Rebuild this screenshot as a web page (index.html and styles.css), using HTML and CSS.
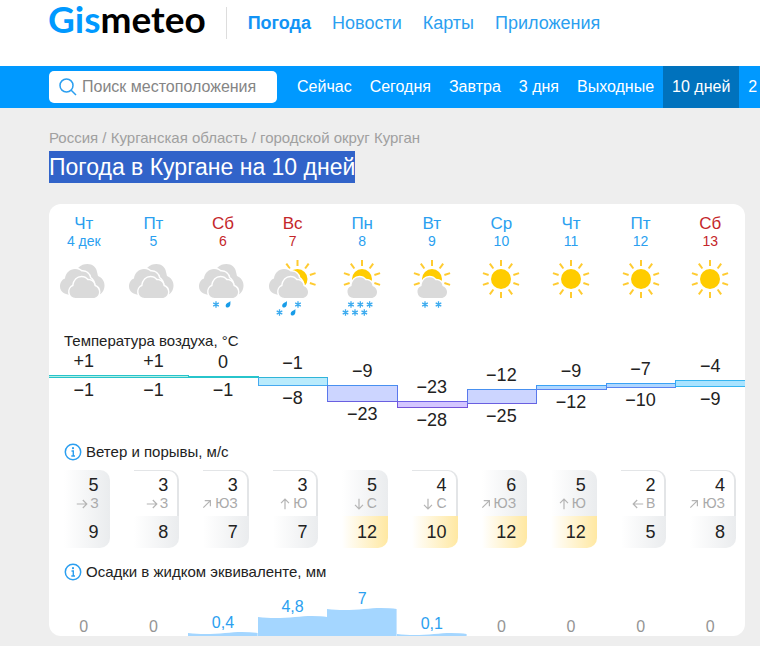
FILE: index.html
```html
<!DOCTYPE html>
<html lang="ru">
<head>
<meta charset="utf-8">
<meta name="viewport" content="width=device-width, initial-scale=1">
<title>Погода в Кургане на 10 дней</title>
<link rel="stylesheet" href="styles.css">
</head>
<body>
<svg class="sprite" aria-hidden="true">
  <defs>
    <symbol id="front" viewBox="0 0 56 62"><path class="cloud" d="M19.5 40A6.2 6.2 0 0 1 17.500 28C18 22.500 21.500 19.300 25.500 19.300C28.500 19.300 30 20.500 31.500 22.200C35.500 21.700 38.300 24.500 38.500 28C41.500 29 43 31.500 43 34C43 37.500 40.500 40 37 40Z"/></symbol>
    <symbol id="mid" viewBox="0 0 56 62"><path class="cloud" d="M16 37C8 37 4 33 4 28.500C4 24.500 6 21.500 9 20.500C9.500 15 14 11 19 11C22 11 24 12 25.500 13.500C30 13 33.500 16 34 20C37 22 38 24 38 28L30 36Z"/></symbol>
    <symbol id="rear" viewBox="0 0 56 62"><path class="cloud" d="M22.500 9.500C25 7 28 6 31.500 6C36.500 6 40.500 9.500 41 14C41.500 15 41.500 17 42 18C46 19.500 48.500 23 48.500 27.500C48.500 32 46 36 42.500 37L30 34L22 12Z"/></symbol>
    <symbol id="sun" viewBox="0 0 56 62">
      <circle class="disc" cx="28" cy="21" r="10"/>
      <g class="rays">
        <path id="ray" d="M28 2V8"/>
        <use href="#ray" transform="rotate(36 28 21)"/><use href="#ray" transform="rotate(72 28 21)"/>
        <use href="#ray" transform="rotate(108 28 21)"/><use href="#ray" transform="rotate(144 28 21)"/>
        <use href="#ray" transform="rotate(180 28 21)"/><use href="#ray" transform="rotate(216 28 21)"/>
        <use href="#ray" transform="rotate(252 28 21)"/><use href="#ray" transform="rotate(288 28 21)"/>
        <use href="#ray" transform="rotate(324 28 21)"/>
      </g>
    </symbol>
    <symbol id="sunrise" viewBox="0 0 56 62">
      <circle class="disc" cx="28" cy="21" r="10"/>
      <g class="rays">
        <path d="M28 2V8"/>
        <use href="#ray" transform="rotate(36 28 21)"/><use href="#ray" transform="rotate(72 28 21)"/>
        <use href="#ray" transform="rotate(108 28 21)"/><use href="#ray" transform="rotate(252 28 21)"/>
        <use href="#ray" transform="rotate(288 28 21)"/><use href="#ray" transform="rotate(324 28 21)"/>
      </g>
    </symbol>
    <g id="flake" class="flake"><path d="M0 -3.200V3.200M-2.800 -1.600L2.800 1.600M-2.800 1.600L2.800 -1.600"/></g>
    <path id="drop" class="drop" d="M2.300 -3.500C2.600 -1 2.600 3 -.300 3C-2.600 3 -2.800 .500 -1.500 -.800C-.500 -1.800 1.200 -2 2.300 -3.500Z"/>
    <symbol id="info" viewBox="0 0 18 18"><circle cx="9" cy="9" r="7.700" fill="none" stroke="#2b9ff0" stroke-width="1.500"/><circle cx="9" cy="5.200" r="1.100" fill="#2b9ff0"/><path d="M7.500 8H9.300V13M7.300 13H11" fill="none" stroke="#2b9ff0" stroke-width="1.400"/></symbol>
    <symbol id="arrow" viewBox="0 0 12 12"><path d="M6 11.200V1.200M2 5.200L6 1.200L10 5.200" fill="none" stroke="#b4b4b4" stroke-width="1.200"/></symbol>
  </defs>
</svg>

<header class="top">
  <a class="logo" href="#"><span class="logo-accent">Gis</span>meteo</a>
  <nav class="sections" aria-label="Разделы">
    <a class="current" href="#">Погода</a>
    <a href="#">Новости</a>
    <a href="#">Карты</a>
    <a href="#">Приложения</a>
  </nav>
</header>

<div class="bar">
  <label class="search">
    <svg class="lens" viewBox="0 0 18 18" aria-hidden="true"><circle cx="7.500" cy="7.500" r="6.500"/><path d="M12.200 12.200L17 17"/></svg>
    <input type="text" placeholder="Поиск местоположения" aria-label="Поиск местоположения">
  </label>
  <nav class="periods" aria-label="Период">
    <a href="#">Сейчас</a>
    <a href="#">Сегодня</a>
    <a href="#">Завтра</a>
    <a href="#">3 дня</a>
    <a href="#">Выходные</a>
    <a class="active" href="#">10 дней</a>
    <a href="#">2 недели</a>
  </nav>
</div>

<main class="page">
  <nav class="crumbs" aria-label="Расположение"><a href="#">Россия</a> / <a href="#">Курганская область</a> / <a href="#">городской округ Курган</a></nav>
  <h1><span class="marked">Погода в Кургане на 10 дней</span></h1>

  <section class="card">
    <div class="row days">
      <a class="day" href="#"><span>Чт</span><small>4 дек</small></a>
      <a class="day" href="#"><span>Пт</span><small>5</small></a>
      <a class="day weekend" href="#"><span>Сб</span><small>6</small></a>
      <a class="day weekend" href="#"><span>Вс</span><small>7</small></a>
      <a class="day" href="#"><span>Пн</span><small>8</small></a>
      <a class="day" href="#"><span>Вт</span><small>9</small></a>
      <a class="day" href="#"><span>Ср</span><small>10</small></a>
      <a class="day" href="#"><span>Чт</span><small>11</small></a>
      <a class="day" href="#"><span>Пт</span><small>12</small></a>
      <a class="day weekend" href="#"><span>Сб</span><small>13</small></a>
    </div>

    <div class="row icons">
      <svg viewBox="0 0 56 62"><use href="#rear"/><use href="#mid"/><use href="#front"/></svg>
      <svg viewBox="0 0 56 62"><use href="#rear"/><use href="#mid"/><use href="#front"/></svg>
      <svg viewBox="0 0 56 62"><use href="#rear"/><use href="#mid"/><use href="#front"/><use href="#flake" x="21" y="46.500"/><use href="#drop" x="33" y="46.500"/></svg>
      <svg viewBox="0 0 56 62"><use href="#sunrise" x="4.500"/><use href="#mid"/><use href="#front"/><use href="#drop" x="19.500" y="46.500"/><use href="#flake" x="33" y="46.500"/><use href="#flake" x="14.500" y="54.500"/><use href="#drop" x="28" y="54.500"/></svg>
      <svg viewBox="0 0 56 62"><use href="#sunrise"/><use href="#front"/><use href="#flake" x="17" y="46.500"/><use href="#flake" x="26.300" y="46.500"/><use href="#flake" x="35.600" y="46.500"/><use href="#flake" x="11.500" y="54.500"/><use href="#flake" x="21" y="54.500"/><use href="#flake" x="30.300" y="54.500"/></svg>
      <svg viewBox="0 0 56 62"><use href="#sunrise"/><use href="#front"/><use href="#flake" x="21" y="46.500"/><use href="#flake" x="34.500" y="46.500"/></svg>
      <svg viewBox="0 0 56 62"><use href="#sun"/></svg>
      <svg viewBox="0 0 56 62"><use href="#sun"/></svg>
      <svg viewBox="0 0 56 62"><use href="#sun"/></svg>
      <svg viewBox="0 0 56 62"><use href="#sun"/></svg>
    </div>

    <h2>Температура воздуха, °C</h2>
    <div class="row temps">
      <div class="temp mild" style="padding-top:0px"><span>+1</span><i style="height:3px"></i><span>−1</span></div>
      <div class="temp mild" style="padding-top:0px"><span>+1</span><i style="height:3px"></i><span>−1</span></div>
      <div class="temp zero" style="padding-top:1px"><span>0</span><i style="height:2px"></i><span>−1</span></div>
      <div class="temp cool" style="padding-top:2px"><span>−1</span><i style="height:9px"></i><span>−8</span></div>
      <div class="temp frost" style="padding-top:10px"><span>−9</span><i style="height:17px"></i><span>−23</span></div>
      <div class="temp deep" style="padding-top:26px"><span>−23</span><i style="height:7px"></i><span>−28</span></div>
      <div class="temp frost" style="padding-top:14px"><span>−12</span><i style="height:15px"></i><span>−25</span></div>
      <div class="temp cold" style="padding-top:10px"><span>−9</span><i style="height:5px"></i><span>−12</span></div>
      <div class="temp cold" style="padding-top:8px"><span>−7</span><i style="height:5px"></i><span>−10</span></div>
      <div class="temp fresh" style="padding-top:5px"><span>−4</span><i style="height:7px"></i><span>−9</span></div>
    </div>

    <h2><svg class="info" aria-hidden="true"><use href="#info"/></svg>Ветер и порывы, м/с</h2>
    <div class="row winds">
      <div class="wind strong"><div class="speed"><b>5</b><small><svg class="arrow e"><use href="#arrow"/></svg>З</small></div><b class="gust">9</b></div>
      <div class="wind"><div class="speed"><b>3</b><small><svg class="arrow e"><use href="#arrow"/></svg>З</small></div><b class="gust">8</b></div>
      <div class="wind"><div class="speed"><b>3</b><small><svg class="arrow ne"><use href="#arrow"/></svg>ЮЗ</small></div><b class="gust">7</b></div>
      <div class="wind"><div class="speed"><b>3</b><small><svg class="arrow"><use href="#arrow"/></svg>Ю</small></div><b class="gust">7</b></div>
      <div class="wind strong"><div class="speed"><b>5</b><small><svg class="arrow s"><use href="#arrow"/></svg>С</small></div><b class="gust warn">12</b></div>
      <div class="wind"><div class="speed"><b>4</b><small><svg class="arrow s"><use href="#arrow"/></svg>С</small></div><b class="gust warn">10</b></div>
      <div class="wind strong"><div class="speed"><b>6</b><small><svg class="arrow ne"><use href="#arrow"/></svg>ЮЗ</small></div><b class="gust warn">12</b></div>
      <div class="wind strong"><div class="speed"><b>5</b><small><svg class="arrow"><use href="#arrow"/></svg>Ю</small></div><b class="gust warn">12</b></div>
      <div class="wind"><div class="speed"><b>2</b><small><svg class="arrow w"><use href="#arrow"/></svg>В</small></div><b class="gust">5</b></div>
      <div class="wind"><div class="speed"><b>4</b><small><svg class="arrow ne"><use href="#arrow"/></svg>ЮЗ</small></div><b class="gust">8</b></div>
    </div>

    <h2><svg class="info" aria-hidden="true"><use href="#info"/></svg>Осадки в жидком эквиваленте, мм</h2>
    <div class="row rain">
      <div class="fall none">0</div>
      <div class="fall none">0</div>
      <div class="fall"><span>0,4</span><svg style="height:4px" viewBox="0 0 70 4" preserveAspectRatio="none"><path d="M0 1C22 4 40 0 54 0Q64 0 70 1V4H0Z"/></svg></div>
      <div class="fall"><span>4,8</span><svg style="height:20px" viewBox="0 0 70 20" preserveAspectRatio="none"><path d="M0 1C22 4 40 0 54 0Q64 0 70 1V20H0Z"/></svg></div>
      <div class="fall"><span>7</span><svg style="height:28px" viewBox="0 0 70 28" preserveAspectRatio="none"><path d="M0 1C22 4 40 0 54 0Q64 0 70 1V28H0Z"/></svg></div>
      <div class="fall"><span>0,1</span><svg style="height:3px" viewBox="0 0 70 3" preserveAspectRatio="none"><path d="M0 1C22 4 40 0 54 0Q64 0 70 1V3H0Z"/></svg></div>
      <div class="fall none">0</div>
      <div class="fall none">0</div>
      <div class="fall none">0</div>
      <div class="fall none">0</div>
    </div>
  </section>
</main>
</body>
</html>
```

FILE: styles.css
```css
* { box-sizing: border-box; }
body {
  margin: 0;
  background: #eee;
  color: #222;
  font-family: "Liberation Sans", Arial, sans-serif;
  font-size: 16px;
  overflow-x: hidden;
}
a { color: #2b9ff0; text-decoration: none; }
.sprite { display: block; width: 0; height: 0; }

.top {
  display: flex;
  align-items: flex-start;
  height: 66px;
  padding: 0 15px 0 48px;
  background: #fff;
}
.logo {
  color: #000;
  font-family: Lato, "Open Sans", sans-serif;
  font-size: 37px;
  font-weight: 700;
  line-height: 38px;
}
.logo-accent { color: #09f; }
.sections {
  display: flex;
  gap: 21px;
  margin: 7px 0 0 20px;
  padding-left: 21px;
  border-left: 1px solid #ddd;
  font-size: 18px;
  line-height: 32px;
}
.sections .current { color: #1293f5; font-weight: 700; }

.bar {
  display: flex;
  align-items: center;
  height: 42px;
  padding-left: 49px;
  background: #09f;
  overflow: hidden;
}
.search {
  display: flex;
  flex: none;
  align-items: center;
  gap: 5px;
  width: 228px;
  height: 32px;
  padding: 0 0 0 10px;
  border-radius: 5px;
  background: #fff;
}
.lens { flex: none; width: 18px; height: 18px; fill: none; stroke: #2b9ff0; stroke-width: 1.5; }
.search input {
  width: 100%;
  min-width: 0;
  padding: 0;
  border: 0;
  outline: 0;
  background: none;
  color: #222;
  font: 16px "Liberation Sans", Arial, sans-serif;
}
.search input::placeholder { color: #858585; opacity: 1; }
.periods { display: flex; flex: none; margin-left: 11px; }
.periods a {
  padding: 0 9px;
  color: #fff;
  font-size: 16px;
  line-height: 42px;
  white-space: nowrap;
}
.periods .active { background: #0072bd; }

.page { padding: 21px 15px 10px 49px; }
.crumbs { color: #a0a0a0; font-size: 15px; line-height: 18px; }
.crumbs a { color: inherit; }
h1 {
  margin: 4px 0 21px;
  color: #fff;
  font-size: 23px;
  font-weight: 400;
  line-height: 32px;
}
.marked { display: inline-block; background: #3163c9; }

.card { padding-top: 11px; border-radius: 12px; background: #fff; overflow: hidden; }
.row { display: grid; grid-template-columns: repeat(10, minmax(0, 1fr)); }
.day { display: flex; flex-direction: column; align-items: center; }
.day span { font-size: 17px; line-height: 18px; }
.day small { font-size: 14px; line-height: 16px; }
.weekend { color: #c4262a; }

.icons { justify-items: center; margin-top: 9px; }
.icons svg { width: 56px; height: 62px; }
.cloud { fill: #dadada; stroke: #fff; stroke-width: 3; paint-order: stroke; }
.disc { fill: #fc0; }
.rays { fill: none; stroke: #ffcb30; stroke-width: 2; }
.flake { fill: none; stroke: #3cabef; stroke-width: 1.3; }
.drop { fill: #189ce8; }

h2 {
  display: flex;
  align-items: center;
  gap: 4px;
  margin: 0;
  padding-left: 15px;
  font-size: 15px;
  font-weight: 400;
  line-height: 18px;
}
.info { width: 18px; height: 18px; }
.icons + h2 { margin-top: 12px; }

.temps { height: 93px; font-size: 18px; }
.temp { text-align: center; line-height: 22px; }
.temp span { display: block; }
.temp i { display: block; margin: 3px -1px 1px 0; border: 1px solid; }
.mild i { background: #b4eee4; border-color: #27c4cb; border-inline: 0; }
.zero i { border-color: #27c4cb; border-inline: 0; }
.cool i { background: #b9ebfc; border-color: #2fb5d8 #46a9f0 #46a9f0; }
.fresh i { background: #a9e3ff; border-color: #35b5f0 #35a6f8; }
.cold i { background: #b0d7ff; border-color: #3aa3f5 #4b8cf3 #5b83f0; }
.frost i { background: #ccd5ff; border-color: #4890f0 #5a78ec #6a5fe0; }
.deep i { background: #d4c6ff; border-color: #6d5fe6 #7255e0 #7552d8; }

.winds { margin-top: 9px; }
.wind { margin: 0 9px 0 15px; text-align: right; }
.wind b { display: block; font-size: 18px; font-weight: 400; }
.speed {
  height: 46px;
  padding: 4px 9px 0 0;
  border: solid #e3e5e7;
  border-width: 1px 2px 0 0;
  border-radius: 0 10px 0 0;
}
.speed b { line-height: 20px; }
.speed small {
  display: flex;
  align-items: center;
  justify-content: flex-end;
  gap: 2px;
  color: #aaa;
  font-size: 14px;
  line-height: 17px;
}
.arrow { flex: none; width: 12px; height: 12px; }
.ne { transform: rotate(45deg); }
.e { transform: rotate(90deg); }
.s { transform: rotate(180deg); }
.w { transform: rotate(270deg); }
.strong .speed { border-color: transparent; background: linear-gradient(90deg, #fff, #eaecee) border-box; }
.gust {
  padding-right: 11px;
  border-radius: 0 0 10px 0;
  background: linear-gradient(90deg, #fff, #eaecee);
  line-height: 32px;
}
.gust.warn { background: linear-gradient(90deg, #fff, #ffe8a2); }
.winds + h2 { margin-top: 15px; }

.rain { height: 55px; align-items: end; font-size: 16px; }
.fall { color: #2b9ff0; text-align: center; line-height: 18px; }
.fall span { display: block; }
.fall svg { display: block; width: 100%; fill: #a4d6ff; }
.fall.none { color: #959595; }
```
